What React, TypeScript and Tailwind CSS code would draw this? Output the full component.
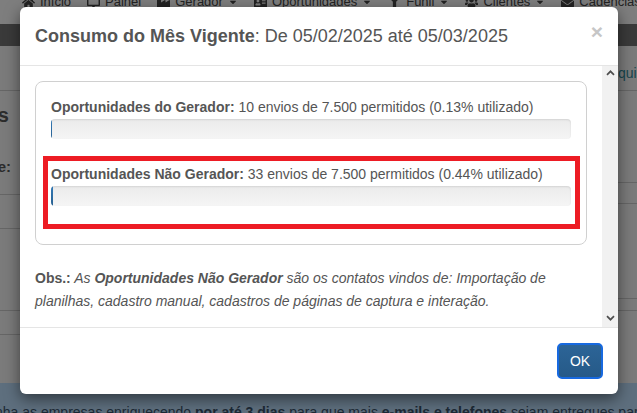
import {
  FaHome,
  FaDesktop,
  FaIndustry,
  FaAddressCard,
  FaFilter,
  FaUsers,
  FaEnvelope,
  FaCaretDown,
} from "react-icons/fa";

const LIMIT = 7500;

const navItems = [
  { icon: FaHome, label: "Início", caret: false },
  { icon: FaDesktop, label: "Painel", caret: false },
  { icon: FaIndustry, label: "Gerador", caret: true },
  { icon: FaAddressCard, label: "Oportunidades", caret: true },
  { icon: FaFilter, label: "Funil", caret: true },
  { icon: FaUsers, label: "Clientes", caret: true },
  { icon: FaEnvelope, label: "Cadências", caret: true },
];

const usage = [
  { label: "Oportunidades do Gerador", sent: 10, highlight: false },
  { label: "Oportunidades Não Gerador", sent: 33, highlight: true },
];

interface UsageRowProps {
  label: string;
  sent: number;
  highlight: boolean;
  className?: string;
}

function UsageRow({ label, sent, highlight, className = "" }: UsageRowProps) {
  const pct = (sent / LIMIT) * 100;

  return (
    <div className={`relative ${className}`}>
      <p className="text-[14px] leading-5 text-[#555]">
        <b>{label}:</b> {sent} envios de 7.500 permitidos ({pct.toFixed(2)}%
        utilizado)
      </p>
      <div className="mt-[2px] h-5 overflow-hidden rounded-[4px] bg-linear-to-b from-[#ebebeb] to-[#f5f5f5] shadow-[inset_0_1px_2px_rgba(0,0,0,0.1)]">
        <div
          className="h-full bg-linear-to-b from-[#337ab7] to-[#286090]"
          style={{ width: `${pct}%` }}
        />
      </div>
      {/* highlight box drawn over the row */}
      {highlight && (
        <div className="pointer-events-none absolute -top-[8px] -left-[8px] -right-[9px] -bottom-[23px] border-[5px] border-[#ed1c24]" />
      )}
    </div>
  );
}

function Chevron({ down = false }: { down?: boolean }) {
  return (
    <svg width="9" height="6" viewBox="0 0 9 6">
      <path
        d={down ? "M1 1.2 L4.5 4.7 L8 1.2" : "M1 4.8 L4.5 1.3 L8 4.8"}
        stroke="#4f4f4f"
        strokeWidth="1.7"
        fill="none"
      />
    </svg>
  );
}

export default function App() {
  return (
    <div className="relative h-[413px] w-[637px] overflow-hidden bg-[#7b7b7b] font-['Liberation_Sans',Arial,sans-serif]">
      {/* page behind the modal, already dimmed */}
      <div className="flex h-full flex-col">
        <nav className="flex h-[24px] shrink-0 items-start gap-[16px] bg-[#7e7e7e] pl-[22px] text-[13px] leading-4 text-[#232323] whitespace-nowrap">
          {navItems.map((item) => (
            <div key={item.label} className="-mt-[6px] flex items-center gap-[5px]">
              <item.icon size={13} />
              <span>{item.label}</span>
              {item.caret && <FaCaretDown size={10} />}
            </div>
          ))}
        </nav>
        <div className="h-[22px] shrink-0 bg-[#3a3a3a]" />

        <div className="flex flex-1">
          <div className="w-[20px] overflow-hidden">
            <div className="h-[45px] border-b border-[#666]" />
            <div className="h-[92px] border-b border-[#666]">
              <div className="mt-[12px] flex w-[9px] justify-end overflow-hidden whitespace-nowrap text-[20px] font-bold leading-6 text-[#2c2c2c]">
                Oportunidades
              </div>
              <div className="mt-[30px] flex w-[11px] justify-end overflow-hidden whitespace-nowrap text-[15px] font-bold leading-5 text-[#2c2c2c]">
                Periodicidade:
              </div>
            </div>
            <div className="h-[34px] border-b border-[#666]" />
            <div className="h-[82px] border-b border-[#666]" />
            <div className="h-[24px] border-b border-[#666]" />
          </div>
          <div className="flex-1" />
          <div className="w-[19px] overflow-hidden">
            <div className="h-[45px] border-b border-[#666] pt-[17px] text-[14px] leading-5 whitespace-nowrap text-[#17464e]">
              quisar
            </div>
            <div className="h-[92px] border-b border-[#666]" />
            <div className="h-[21px] border-b border-[#666]" />
            <div className="h-[95px] border-b border-[#666]" />
            <div className="h-[12px] border-b border-[#666]" />
          </div>
        </div>

        <div className="h-[30px] shrink-0 overflow-hidden bg-[#5e6f7e] pt-[19px] text-[14px] leading-5 whitespace-nowrap text-[#1c2935]">
          <span className="-ml-[5px] inline-block">
            nha as empresas enriquecendo <b>por até 3 dias</b> para que mais{" "}
            <b>e-mails e telefones</b> sejam entregues para você
          </span>
        </div>
      </div>

      {/* modal */}
      <div className="absolute inset-0">
        <div className="ml-[20px] mt-[7px] w-[598px] overflow-hidden rounded-[6px] bg-white shadow-[0_5px_15px_rgba(0,0,0,0.5)]">
          <div className="flex items-start justify-between border-b border-[#e5e5e5] p-[15px]">
            <h4 className="text-[18px] leading-[28px] text-[#555]">
              <span className="font-bold">Consumo do Mês Vigente</span>: De
              05/02/2025 até 05/03/2025
            </h4>
            <button className="-mt-[1px] text-[21px] font-bold leading-none text-[#c6c6c6]">
              ×
            </button>
          </div>

          <div className="flex h-[261px]">
            <div className="flex-1 overflow-hidden p-[15px]">
              <div className="rounded-[8px] border border-[#d0d0d0] px-[15px] pt-[15px] pb-[38px]">
                {usage.map((u, i) => (
                  <UsageRow
                    key={u.label}
                    label={u.label}
                    sent={u.sent}
                    highlight={u.highlight}
                    className={i > 0 ? "mt-[25px]" : ""}
                  />
                ))}
              </div>
              <p className="mt-[22px] text-[14px] italic leading-[23px] text-[#555]">
                <b className="not-italic">Obs.:</b> As{" "}
                <b>Oportunidades Não Gerador</b> são os contatos vindos de:
                Importação de planilhas, cadastro manual, cadastros de páginas
                de captura e interação.
              </p>
            </div>
            <div className="flex w-[16px] flex-col items-center justify-between bg-[#f1f1f1] pt-[4px] pb-[6px]">
              <Chevron />
              <Chevron down />
            </div>
          </div>

          <div className="flex justify-end border-t border-[#e5e5e5] p-[15px]">
            <button className="h-[36px] w-[46px] rounded-[5px] border-2 border-[#1769e0] bg-linear-to-b from-[#2c6497] to-[#265a88] text-[14px] text-white">
              OK
            </button>
          </div>
        </div>
      </div>
    </div>
  );
}
